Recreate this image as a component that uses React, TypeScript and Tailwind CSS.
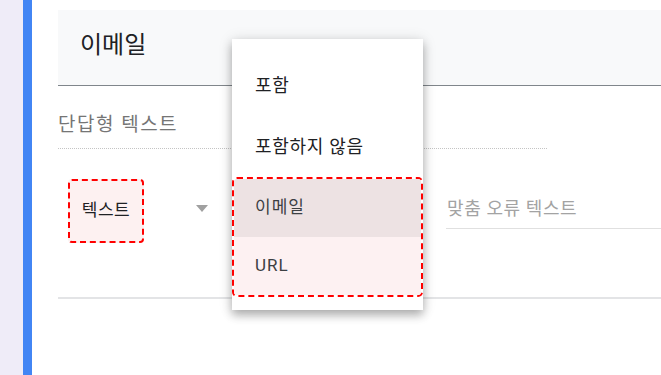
const font = { fontFamily: 'Roboto, "Noto Sans CJK KR", sans-serif' };

const menuItems = [
  { label: "포함", bg: "" },
  { label: "포함하지 않음", bg: "" },
  { label: "이메일", bg: "bg-[#ede2e3]" },
  { label: "URL", bg: "bg-[#fdf1f2]" },
];

const App = () => {
  return (
    <div className="flex h-[375px] w-[661px] overflow-hidden bg-white" style={font}>
      {/* page background + active blue edge */}
      <div className="w-[23px] shrink-0 bg-[#efecf8]" />
      <div className="w-[9px] shrink-0 bg-[#4285f4]" />

      {/* question card */}
      <div className="relative flex-1 pl-[26px] pt-[10px]">
        <div className="flex h-[76px] items-center border-b border-[#80868b] bg-[#f8f9fa] pb-[6px] pl-[22px]">
          <span className="text-[24px] leading-[30px] text-[#202124]">이메일</span>
        </div>

        <div className="mt-[27px] w-[489px] border-b border-dotted border-[#c4c4c4] pb-[10px]">
          <span className="text-[19px] leading-[24px] tracking-[1.5px] text-[#757575]">단답형 텍스트</span>
        </div>

        <div className="mt-[30px] flex items-start">
          <div className="ml-[10px] flex h-[64px] w-[76px] items-center justify-center rounded-[4px] border-2 border-dashed border-[#ff0000] bg-[#fdf1f1]">
            <span className="text-[17px] tracking-[0.5px] text-[#202124]">텍스트</span>
          </div>
          <div className="ml-[52px] mt-[26px]">
            <svg width="12" height="7" viewBox="0 0 12 7">
              <path d="M0 0 L12 0 L6 7 Z" fill="#a0a0a0" />
            </svg>
          </div>
          <div className="ml-auto mt-[19px] w-[215px] border-b border-[#e0e0e0] pb-[6px] pl-px">
            <span className="text-[18px] leading-[22px] tracking-[0.6px] text-[#a3a3a3]">맞춤 오류 텍스트</span>
          </div>
        </div>

        <div className="mt-[54px] border-t-2 border-[#e3e4e6]" />

        {/* dropdown menu */}
        <div className="absolute left-[200px] top-[39px] w-[191px] bg-white pb-[13px] pt-[16px] shadow-[0_5px_9px_rgba(0,0,0,0.28),0_1px_14px_rgba(0,0,0,0.12)]">
          {menuItems.slice(0, 2).map((item) => (
            <div key={item.label} className="flex h-[61px] items-center pl-[23px]">
              <span className="text-[18px] tracking-[0.7px] text-[#202124]">{item.label}</span>
            </div>
          ))}
          <div className="overflow-hidden rounded-[5px] border-2 border-dashed border-[#ff0000]">
            {menuItems.slice(2).map((item) => (
              <div key={item.label} className={`flex h-[58px] items-center pl-[21px] ${item.bg}`}>
                <span className="text-[17px] tracking-[1px] text-[#3c4043]">{item.label}</span>
              </div>
            ))}
          </div>
        </div>
      </div>
    </div>
  );
};

export default App;
